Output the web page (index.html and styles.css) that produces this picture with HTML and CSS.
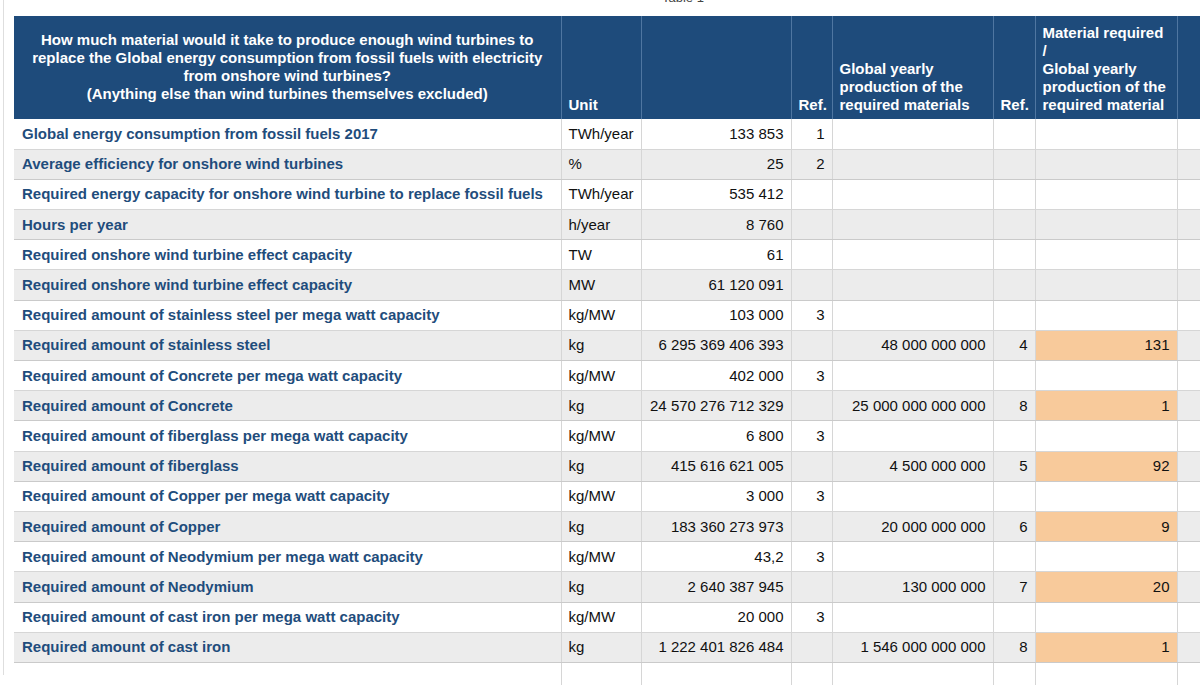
FILE: index.html
```html
<!DOCTYPE html>
<html>
<head>
<meta charset="utf-8">
<link rel="stylesheet" href="styles.css">
</head>
<body>
<div class="sheet">
  <div class="title">Table 1</div>
  <table class="grid">
    <colgroup>
      <col class="c-label"><col class="c-unit"><col class="c-val"><col class="c-ref"><col class="c-glob"><col class="c-ref2"><col class="c-ratio"><col class="c-extra">
    </colgroup>
    <thead>
      <tr class="head">
        <th class="h-label">How much material would it take to produce enough wind turbines to<br>replace the Global energy consumption from fossil fuels with electricity<br>from onshore wind turbines?<br>(Anything else than wind turbines themselves excluded)</th>
        <th class="h-left">Unit</th>
        <th></th>
        <th class="h-right">Ref.</th>
        <th class="h-left">Global yearly<br>production of the<br>required materials</th>
        <th class="h-right">Ref.</th>
        <th class="h-left">Material required<br>/<br>Global yearly<br>production of the<br>required material</th>
        <th></th>
      </tr>
    </thead>
    <tbody>
      <tr><td class="lbl">Global energy consumption from fossil fuels 2017</td><td class="unit">TWh/year</td><td class="num">133 853</td><td class="num">1</td><td></td><td></td><td></td><td></td></tr>
      <tr class="alt"><td class="lbl">Average efficiency for onshore wind turbines</td><td class="unit">%</td><td class="num">25</td><td class="num">2</td><td></td><td></td><td></td><td></td></tr>
      <tr><td class="lbl">Required energy capacity for onshore wind turbine to replace fossil fuels</td><td class="unit">TWh/year</td><td class="num">535 412</td><td></td><td></td><td></td><td></td><td></td></tr>
      <tr class="alt"><td class="lbl">Hours per year</td><td class="unit">h/year</td><td class="num">8 760</td><td></td><td></td><td></td><td></td><td></td></tr>
      <tr><td class="lbl">Required onshore wind turbine effect capacity</td><td class="unit">TW</td><td class="num">61</td><td></td><td></td><td></td><td></td><td></td></tr>
      <tr class="alt"><td class="lbl">Required onshore wind turbine effect capacity</td><td class="unit">MW</td><td class="num">61 120 091</td><td></td><td></td><td></td><td></td><td></td></tr>
      <tr><td class="lbl">Required amount of stainless steel per mega watt capacity</td><td class="unit">kg/MW</td><td class="num">103 000</td><td class="num">3</td><td></td><td></td><td></td><td></td></tr>
      <tr class="alt"><td class="lbl">Required amount of stainless steel</td><td class="unit">kg</td><td class="num">6 295 369 406 393</td><td></td><td class="num">48 000 000 000</td><td class="num">4</td><td class="num hot">131</td><td></td></tr>
      <tr><td class="lbl">Required amount of Concrete per mega watt capacity</td><td class="unit">kg/MW</td><td class="num">402 000</td><td class="num">3</td><td></td><td></td><td></td><td></td></tr>
      <tr class="alt"><td class="lbl">Required amount of Concrete</td><td class="unit">kg</td><td class="num">24 570 276 712 329</td><td></td><td class="num">25 000 000 000 000</td><td class="num">8</td><td class="num hot">1</td><td></td></tr>
      <tr><td class="lbl">Required amount of fiberglass per mega watt capacity</td><td class="unit">kg/MW</td><td class="num">6 800</td><td class="num">3</td><td></td><td></td><td></td><td></td></tr>
      <tr class="alt"><td class="lbl">Required amount of fiberglass</td><td class="unit">kg</td><td class="num">415 616 621 005</td><td></td><td class="num">4 500 000 000</td><td class="num">5</td><td class="num hot">92</td><td></td></tr>
      <tr><td class="lbl">Required amount of Copper per mega watt capacity</td><td class="unit">kg/MW</td><td class="num">3 000</td><td class="num">3</td><td></td><td></td><td></td><td></td></tr>
      <tr class="alt"><td class="lbl">Required amount of Copper</td><td class="unit">kg</td><td class="num">183 360 273 973</td><td></td><td class="num">20 000 000 000</td><td class="num">6</td><td class="num hot">9</td><td></td></tr>
      <tr><td class="lbl">Required amount of Neodymium per mega watt capacity</td><td class="unit">kg/MW</td><td class="num">43,2</td><td class="num">3</td><td></td><td></td><td></td><td></td></tr>
      <tr class="alt"><td class="lbl">Required amount of Neodymium</td><td class="unit">kg</td><td class="num">2 640 387 945</td><td></td><td class="num">130 000 000</td><td class="num">7</td><td class="num hot">20</td><td></td></tr>
      <tr><td class="lbl">Required amount of cast iron per mega watt capacity</td><td class="unit">kg/MW</td><td class="num">20 000</td><td class="num">3</td><td></td><td></td><td></td><td></td></tr>
      <tr class="alt"><td class="lbl">Required amount of cast iron</td><td class="unit">kg</td><td class="num">1 222 401 826 484</td><td></td><td class="num">1 546 000 000 000</td><td class="num">8</td><td class="num hot">1</td><td></td></tr>
      <tr class="empty"><td></td><td></td><td></td><td></td><td></td><td></td><td></td><td></td></tr>
    </tbody>
  </table>
</div>
</body>
</html>
```

FILE: styles.css
```css
html, body {
  margin: 0;
  padding: 0;
  background: #ffffff;
  overflow: hidden;
  width: 1200px;
  height: 685px;
}

body {
  font-family: "Liberation Sans", Arial, Helvetica, sans-serif;
  color: #111111;
}

.sheet {
  margin-left: 3px;
  border-left: 1px solid #dedede;
  padding-left: 10px;
  height: 685px;
}

.title {
  font-size: 13px;
  line-height: 16px;
  color: #444444;
  padding-left: 648px;
  margin-top: -10px;
  height: 16px;
  margin-bottom: 10px;
}

.grid {
  border-collapse: collapse;
  table-layout: fixed;
  width: 1223px;
}

.c-label { width: 547px; }
.c-unit { width: 80px; }
.c-val { width: 150px; }
.c-ref { width: 41px; }
.c-glob { width: 161px; }
.c-ref2 { width: 42px; }
.c-ratio { width: 142px; }
.c-extra { width: 60px; }

.head {
  height: 103px;
}

.head th {
  background: #1e4b7b;
  color: #ffffff;
  font-size: 15px;
  font-weight: bold;
  line-height: 18px;
  vertical-align: bottom;
  padding: 0 7px 5px 7px;
  border-left: 1px solid #4f76a1;
  white-space: nowrap;
}

.head th:first-child {
  border-left: none;
}

.head .h-label {
  text-align: center;
  vertical-align: middle;
  padding: 0 8px 2px 8px;
}

.head .h-left {
  text-align: left;
}

.head .h-right {
  text-align: right;
}

tbody tr {
  height: 30.2px;
}

tbody td {
  font-size: 15px;
  line-height: 18px;
  padding: 0 7px;
  border: 1px solid #d6d6d6;
  border-top: none;
  white-space: nowrap;
  overflow: hidden;
}

tbody td:first-child {
  border-left: none;
}

tbody td:nth-child(2) {
  border-left: 1px solid #6f6f6f;
}

tbody .alt td {
  background: #ececec;
  border-bottom-color: #cacaca;
}

.lbl {
  font-weight: bold;
  color: #1f4d7c;
  padding-left: 8px;
}

.unit {
  text-align: left;
}

.num {
  text-align: right;
}

tbody .alt td.hot {
  background: #f8ca9b;
}

.empty {
  height: 40px;
}

.empty td {
  border-bottom: none;
}
```
